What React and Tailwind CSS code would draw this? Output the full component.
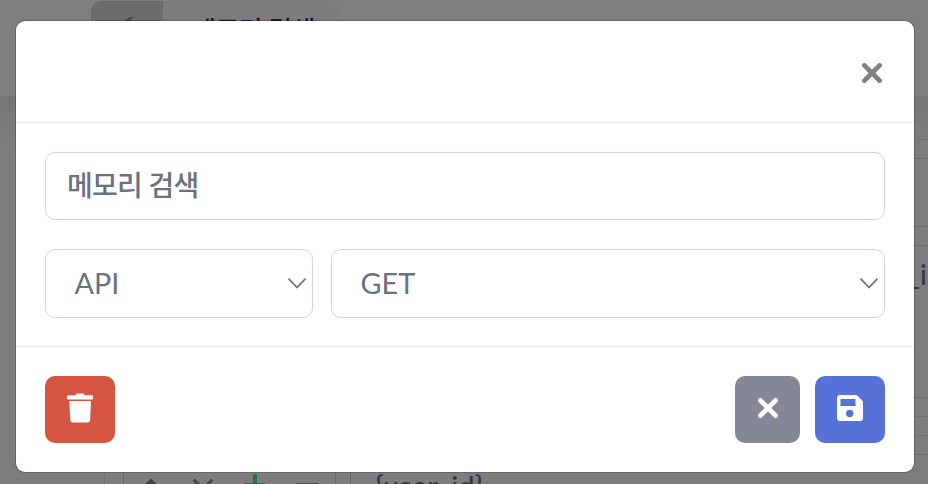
import React from 'react';

const TimesIcon = ({ className, strokeWidth = 4.8 }) => (
  <svg viewBox="0 0 20 20" className={className} fill="none" stroke="currentColor" strokeWidth={strokeWidth} strokeLinecap="round">
    <path d="M2.400 2.400 17.600 17.600M17.600 2.400 2.400 17.600" />
  </svg>
);

const TrashIcon = () => (
  <svg viewBox="0 0 26 30" className="w-[26px] h-[30px]" fill="currentColor">
    <path d="M1 2.200h7.600c.3-1 1-1.600 2-1.600h4.800c1 0 1.700.6 2 1.600H25c.8 0 1 .3 1 1v2.400c0 .5-.2.8-.8.8H.8C.2 6.400 0 6.100 0 5.600V3.200c0-.7.3-1 1-1Z" />
    <path d="M2.200 8h21.800l-.9 19c-.1 1.700-1 2.500-2.500 2.500H5.900c-1.500 0-2.500-.8-2.600-2.500L2.200 8Z" />
  </svg>
);

const SaveIcon = () => (
  <svg viewBox="0 0 26 26" className="w-[26px] h-[26px]" fill="currentColor" fillRule="evenodd">
    <path d="M3 0h15.600c.8 0 1.500.3 2 .8l4.600 4.600c.5.500.8 1.200.8 2V23a3 3 0 0 1-3 3H3a3 3 0 0 1-3-3V3a3 3 0 0 1 3-3ZM4 4a.5.500 0 0 0-.5.500V10.500a.5.500 0 0 0 .5.500H18a.5.500 0 0 0 .5-.5V4.500A.5.500 0 0 0 18 4H4ZM12.700 14.700a3.700 3.700 0 1 0 0 7.400 3.700 3.700 0 0 0 0-7.400Z" />
  </svg>
);

const ChevronDown = () => (
  <svg viewBox="0 0 18 12" className="mt-px w-[18px] h-3 shrink-0" fill="none" stroke="#6e707e" strokeWidth="1.800" strokeLinecap="round" strokeLinejoin="round">
    <path d="m1 1.200 8 8.300 8-8.300" />
  </svg>
);

const SelectBox = ({ value, className }) => (
  <button className={`flex h-[69px] items-center justify-between rounded-[10px] border border-[#d1d3e2] bg-white pb-px pl-[28.500px] pr-[6px] ${className}`}>
    <span>{value}</span>
    <ChevronDown />
  </button>
);

// Dimmed editor page behind the dialog
const EditorPage = () => (
  <div className="h-[484px] w-[928px] overflow-hidden bg-[#7c7c7c] text-[#37373f]">
    <header className="flex h-24 bg-[#7f7f7f] pl-[91px] pt-px">
      <div className="flex h-[68px] w-[248px] overflow-hidden rounded-[10px] bg-[#7c7c7f]">
        <div className="flex w-[72px] justify-center bg-[#696b6d] pt-4">
          <svg viewBox="0 0 24 24" className="ml-2 h-6 w-6" fill="#454649">
            <path d="M14 0Q6 0 3 8v10h6V8q1-4 5-7Z" />
          </svg>
        </div>
        <span className="pl-[29px] pt-[10px] text-[26px] font-medium tracking-[-0.5px] text-[#1b1b1e]">메모리 검색</span>
      </div>
    </header>
    <main className="h-[388px] bg-gradient-to-b from-[#757575] to-[#7d7d7d] to-[50px] pl-[104px] pt-[43px]">
      <section className="flex h-[278px] w-[1000px] flex-col gap-[18px] border border-[#717171] px-[18px] pt-[18px]">
        <div className="h-[69px] border border-[#696971]" />
        <div className="flex h-[153px] border border-[#696971] pl-[783px] pt-[7px] text-[28px] font-medium">_i</div>
      </section>
      <section className="mt-[18px] flex h-24 w-[1000px] gap-[14px] border border-[#717171] px-[18px] pt-[18px]">
        <div className="flex h-[69px] w-[213px] gap-[30px] border border-[#696971] pl-4 pt-[23px]">
          <svg viewBox="0 0 22 22" className="h-[22px] w-[22px]" fill="none" stroke="#45454d" strokeWidth="4" strokeLinecap="round">
            <path d="M3 11 11 3l8 8M11 3v17" />
          </svg>
          <TimesIcon className="h-[22px] w-[22px] text-[#45454d]" strokeWidth={2.8} />
          <svg viewBox="0 0 22 22" className="h-[22px] w-[22px] overflow-visible" fill="none" stroke="#286e48" strokeWidth="4" strokeLinecap="round">
            <path d="M11-2v20M2 7h18" />
          </svg>
          <svg viewBox="0 0 22 22" className="h-[22px] w-[22px]" fill="none" stroke="#703c38" strokeWidth="4">
            <path d="M0 7h22" />
          </svg>
        </div>
        <div className="h-[69px] flex-1 border border-[#696971] pl-6 pt-[10px] text-[29px] font-medium leading-[42px]">{'{user_id}'}</div>
      </section>
    </main>
  </div>
);

const EditModal = () => (
  <div
    role="dialog"
    className="absolute left-[15px] top-5 w-[900px] rounded-[10px] border border-black/20 bg-white bg-clip-padding text-[28.800px] leading-none text-[#6e707e]"
  >
    <div className="flex h-[102px] items-center justify-end border-b border-[#e3e6f0] pr-8 pt-[3px]">
      <button aria-label="Close" className="text-[#808080]">
        <TimesIcon className="h-5 w-5" />
      </button>
    </div>

    <div className="flex h-[224px] flex-col gap-[29px] border-b border-[#e3e6f0] px-[29px] pt-[29px]">
      <input
        defaultValue="메모리 검색"
        className="h-[68px] w-full rounded-[10px] border border-[#d1d3e2] bg-white px-[21px] pb-1 text-[28px] font-medium tracking-[-0.7px] outline-none"
      />
      <div className="flex gap-[18px]">
        <SelectBox value="API" className="w-[268px]" />
        <SelectBox value="GET" className="flex-1" />
      </div>
    </div>

    <div className="flex h-[125px] items-center justify-between px-[29px]">
      <button aria-label="Delete" className="flex h-[67px] w-[70px] items-center justify-center rounded-[10px] bg-[#d55541] pb-[3px] text-white">
        <TrashIcon />
      </button>
      <div className="flex gap-[15px]">
        <button aria-label="Cancel" className="flex h-[67px] w-[65px] items-center justify-center rounded-[10px] bg-[#858796] pb-[3px] text-white">
          <TimesIcon className="h-5 w-5" />
        </button>
        <button aria-label="Save" className="flex h-[67px] w-[70px] items-center justify-center rounded-[10px] bg-[#5672d8] pb-[3px] text-white">
          <SaveIcon />
        </button>
      </div>
    </div>
  </div>
);

const App = () => {
  return (
    <div className="relative h-[484px] w-[928px] overflow-hidden font-['Lato','Noto_Sans_CJK_KR',sans-serif]">
      <EditorPage />
      <EditModal />
    </div>
  );
};

export default App;
